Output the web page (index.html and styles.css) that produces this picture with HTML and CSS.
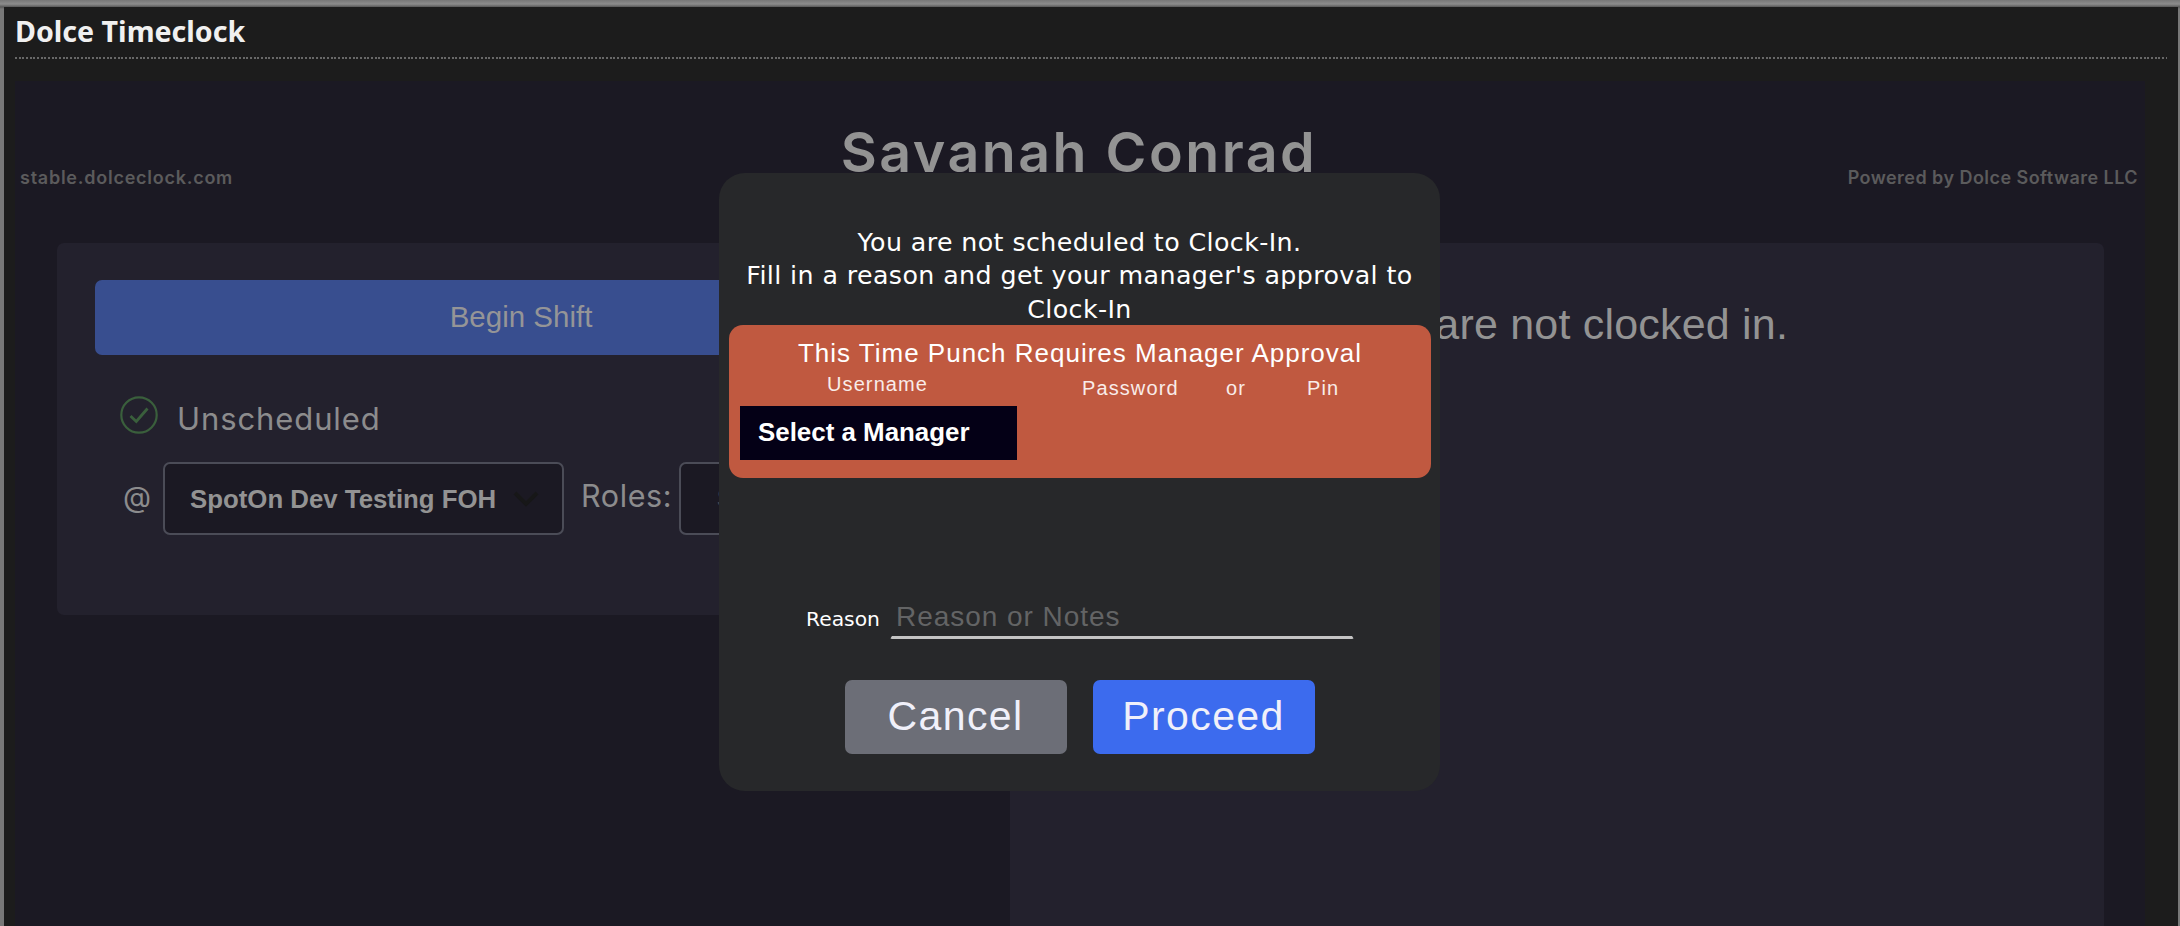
FILE: index.html
```html
<!DOCTYPE html>
<html lang="en">
<head>
    <meta charset="UTF-8">
    <meta name="viewport" content="width=device-width, initial-scale=1.0">
    <title>Dolce Timeclock</title>
    <link rel="stylesheet" href="styles.css">
</head>
<body>
    <div class="window">
        <h2 class="window-title">Dolce Timeclock</h2>
        <div class="divider"></div>

        <div class="app">
            <header class="header">
                <span class="site">stable.dolceclock.com</span>
                <h1>Savanah Conrad</h1>
                <span class="powered">Powered by Dolce Software LLC</span>
            </header>

            <div class="columns">
                <div class="panel shift-panel">
                    <button class="begin-btn">Begin Shift</button>
                    <div class="status">
                        <svg class="check" viewBox="0 0 38 38" fill="none" stroke="#3a5f3c" stroke-width="2.2">
                            <circle cx="19" cy="19" r="17.7"/>
                            <path d="M10.5 20l5.8 5.5L27.5 12.5" stroke-width="2.8"/>
                        </svg>
                        <span class="status-text">Unscheduled</span>
                    </div>
                    <div class="location">
                        <span class="at">@</span>
                        <div class="select place-select">
                            <span>SpotOn Dev Testing FOH</span>
                            <svg class="chevron" viewBox="0 0 26 16" fill="none" stroke="#171718" stroke-width="4">
                                <path d="M2 2l11 11L24 2"/>
                            </svg>
                        </div>
                        <span class="roles">Roles:</span>
                        <div class="select role-select">Select</div>
                    </div>
                </div>
                <div class="panel clock-panel">
                    <p>You are not clocked in.</p>
                </div>
            </div>
        </div>
    </div>

    <!-- Manager approval dialog -->
    <div class="modal">
        <p class="message">You are not scheduled to Clock-In.<br>Fill in a reason and get your manager's approval to<br>Clock-In</p>
        <div class="approval">
            <p class="approval-title">This Time Punch Requires Manager Approval</p>
            <div class="approval-labels">
                <span class="username">Username</span>
                <span class="password">Password</span>
                <span class="or">or</span>
                <span class="pin">Pin</span>
            </div>
            <div class="manager-select">Select a Manager</div>
        </div>
        <div class="reason">
            <label for="reason">Reason</label>
            <input type="text" id="reason" placeholder="Reason or Notes">
        </div>
        <div class="actions">
            <button class="cancel">Cancel</button>
            <button class="proceed">Proceed</button>
        </div>
    </div>
</body>
</html>
```

FILE: styles.css
```css
* {
    margin: 0;
    padding: 0;
    box-sizing: border-box;
}

body {
    height: 926px;
    overflow: hidden;
    position: relative;
    background: #585858;
    font-family: "Liberation Sans", Arial, sans-serif;
}

.window {
    height: 926px;
    border: solid #585858;
    border-width: 7px 2px 0 4px;
    border-image: linear-gradient(#777, #8c8c8c 4px, #585858 7px, #787878 9px) 7 2 0 4;
    background: #1c1c1c;
    padding-left: 11px;
}

.window-title {
    height: 50px;
    font: bold 28.6px/48px "Noto Sans", sans-serif;
    color: #f0f0f0;
}

.divider {
    width: 2152px;
    height: 2px;
    background: repeating-linear-gradient(90deg, #686868 0 2px, #1c1c1c 2px 3.67px);
}

.app {
    width: 2130px;
    height: 845px;
    margin-top: 22px;
    background: #1b1923;
}

.header {
    display: grid;
    grid-template-columns: 1fr auto 1fr;
    height: 162px;
    padding: 0 7px 0 5px;
}

.header h1 {
    margin-top: 39px;
    font: 600 55.5px/64px Inter, sans-serif;
    letter-spacing: 2.5px;
    color: #939393;
}

.site,
.powered {
    margin-top: 85px;
    font: 600 18px/24px Inter, sans-serif;
    letter-spacing: 0.45px;
    color: #5b5b5c;
}

.site {
    letter-spacing: 0.75px;
}

.powered {
    text-align: right;
}

.columns {
    display: flex;
    gap: 25px;
    padding-left: 42px;
}

.panel {
    background: #23212d;
    border-radius: 7px;
}

.shift-panel {
    width: 928px;
    height: 372px;
    padding: 37px 38px 0;
}

.begin-btn {
    display: block;
    width: 852px;
    height: 75px;
    padding-bottom: 2px;
    border: none;
    border-radius: 7px;
    background: #384e8f;
    color: #959597;
    font: 29.5px "Liberation Sans", sans-serif;
}

.status {
    display: flex;
    gap: 19px;
    height: 38px;
    margin: 41px 0 0 25px;
}

.check {
    width: 38px;
    height: 38px;
}

.status-text {
    margin-top: 4px;
    font: 400 31px/38px Inter, sans-serif;
    letter-spacing: 0.9px;
    color: #8c8c8d;
}

.location {
    display: flex;
    margin: 28px 0 0 28px;
    height: 73px;
}

.at,
.roles {
    font: 400 30.5px/73px Inter, sans-serif;
    color: #8c8c8d;
}

.at {
    width: 40px;
    font-size: 29px;
    line-height: 70px;
}

.select {
    border: 2px solid #4b4c57;
    border-radius: 7px;
    background: #1b1923;
    color: #939393;
    font-size: 25.8px;
    font-weight: bold;
}

.place-select {
    display: flex;
    align-items: center;
    width: 401px;
    padding: 1px 0 0 25px;
}

.chevron {
    width: 26px;
    height: 16px;
    margin-left: 17px;
}

.roles {
    width: 115px;
    padding-left: 17px;
    line-height: 67px;
    letter-spacing: 0.6px;
}

.role-select {
    width: 230px;
    padding-left: 36px;
    line-height: 69px;
    color: #4a4a50;
}

.clock-panel {
    width: 1094px;
    height: 690px;
    padding: 51px 0 0 24px;
    text-align: center;
    color: #939393;
    font-size: 43px;
    line-height: 60px;
    letter-spacing: 0.2px;
}

.modal {
    position: absolute;
    left: 719px;
    top: 173px;
    width: 721px;
    height: 618px;
    padding: 53px 10px 0;
    border-radius: 26px;
    background: #27282a;
    color: #fff;
}

.message {
    height: 99px;
    font: 25.3px/33.4px "DejaVu Sans", Verdana, sans-serif;
    letter-spacing: 0.4px;
    text-align: center;
    white-space: nowrap;
}

.approval {
    width: 702px;
    height: 153px;
    padding-top: 12px;
    border-radius: 14px;
    background: #c05940;
}

.approval-title {
    font-size: 26px;
    line-height: 32px;
    letter-spacing: 1px;
    text-align: center;
}

.approval-labels {
    display: flex;
    height: 37px;
    padding-left: 98px;
    font-size: 20px;
    line-height: 26px;
    letter-spacing: 1.1px;
    color: #f9ece9;
}

.username {
    width: 255px;
    padding-top: 2px;
}

.password,
.or,
.pin {
    padding-top: 6px;
}

.password {
    width: 144px;
}

.or {
    width: 81px;
}

.manager-select {
    width: 277px;
    height: 54px;
    margin-left: 11px;
    padding-left: 18px;
    background: #040016;
    font-size: 25.9px;
    font-weight: bold;
    line-height: 53px;
}

.reason {
    display: flex;
    justify-content: flex-end;
    align-items: flex-start;
    height: 202px;
    padding: 119px 76px 0 0;
}

.reason label {
    width: 84px;
    font: 20.3px/45px "DejaVu Sans", Verdana, sans-serif;
}

.reason input {
    width: 464px;
    height: 42px;
    padding: 0 0 1px 4px;
    border: 2px solid transparent;
    border-bottom: 3px solid #c4c4c4;
    border-radius: 2px;
    outline: none;
    background: transparent;
    font: 28px "Liberation Sans", sans-serif;
    letter-spacing: 0.95px;
}

.reason input::placeholder {
    color: #636465;
}

.actions {
    display: flex;
    justify-content: center;
    gap: 26px;
}

.actions button {
    width: 222px;
    height: 74px;
    padding-bottom: 2px;
    border: none;
    border-radius: 7px;
    font: 41px "Liberation Sans", sans-serif;
    letter-spacing: 1.4px;
    color: #f0f0fa;
}

.cancel {
    background: #6c6e77;
}

.proceed {
    background: #3c6bee;
}
```
